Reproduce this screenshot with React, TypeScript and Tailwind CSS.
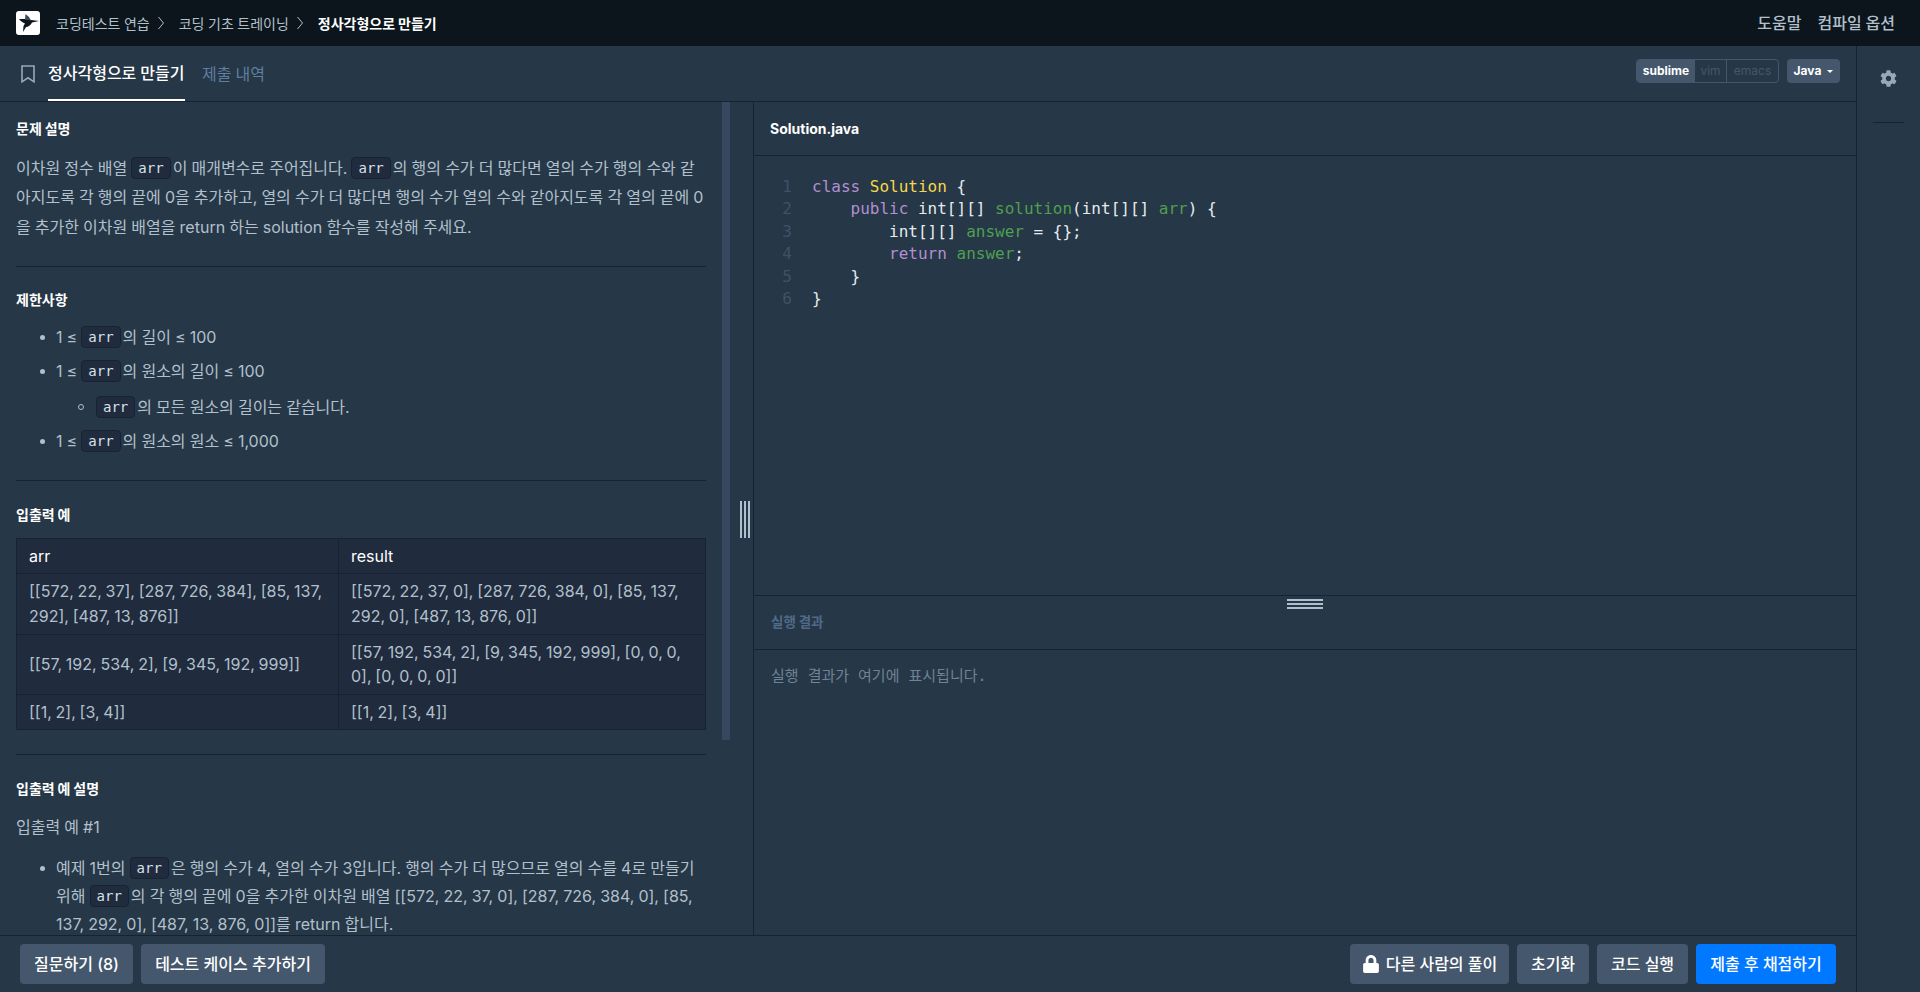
import React from 'react'
import { FaCog, FaLock } from 'react-icons/fa'

const sans = "font-['Inter','Noto_Sans_CJK_KR',sans-serif] [word-spacing:-0.4px]"

function Arr() {
  return (
    <code className="mr-[2px] inline-block h-[22px] rounded-[4px] border border-[#172334] bg-[#202b3d] px-[6px] align-[1px] font-['DejaVu_Sans_Mono','Noto_Sans_CJK_KR',monospace] text-[14px] leading-[20px] text-[#d7e2eb]">
      arr
    </code>
  )
}

function Crumb({ children }: { children: React.ReactNode }) {
  return (
    <span className="flex items-center">
      <span className="text-[14px] text-[#b2c0cc]">{children}</span>
      <svg width="6" height="14" viewBox="0 0 6 14" className="ml-[8px] mr-[15px]" fill="none" stroke="#b2c0cc" strokeWidth="1">
        <path d="M0.5 1 L5.5 7 L0.5 13" />
      </svg>
    </span>
  )
}

function Heading({ children, className = '' }: { children: React.ReactNode; className?: string }) {
  return <h5 className={`text-[14px] font-bold leading-[20px] text-white ${className}`}>{children}</h5>
}

function Hr({ className = '' }: { className?: string }) {
  return <div className={`h-px bg-[#172334] ${className}`} />
}

function Bullet({ children, className = '' }: { children: React.ReactNode; className?: string }) {
  return (
    <li className={`relative pl-[40px] leading-[28px] ${className}`}>
      <span className="absolute left-[24px] top-[12px] h-[5px] w-[5px] rounded-full bg-[#b2c0cc]" />
      {children}
    </li>
  )
}

function Btn({ children, className = '' }: { children: React.ReactNode; className?: string }) {
  return (
    <button className={`flex h-[40px] items-center justify-center rounded-[4px] bg-[#44576c] text-[16px] font-medium text-white ${className}`}>
      {children}
    </button>
  )
}

const cell = 'border border-[#172334] px-[12px] py-[5px] align-middle text-[16px] leading-[24.6px] [word-spacing:-0.7px]'

export default function App() {
  const kw = 'text-[#b28fd0]'
  const fn = 'text-[#4e9f50]'
  return (
    <div className={`flex h-[992px] w-[1920px] flex-col overflow-hidden bg-[#263747] text-[#b2c0cc] ${sans}`}>
      {/* 상단 네비 */}
      <header className="flex h-[46px] shrink-0 items-center justify-between bg-[#0c151c] pl-[16px] pr-[25px]">
        <div className="flex items-center">
          <div className="mr-[16px] h-[24px] w-[24px] rounded-[3px] bg-white">
            <svg width="24" height="24" viewBox="0 0 24 24">
              <path fill="#0c151c" d="M3 8 L9 8 L15 9 L23 10 L16 11.5 C15 14 12 16 10 16 L7 21 L7.5 15 L9 12.5 C7 11.5 4.5 10 3 8 Z" />
              <path fill="#3d4a55" d="M9 8.5 L9.5 3 L13 6 L15 9.5 Z" />
            </svg>
          </div>
          <Crumb>코딩테스트 연습</Crumb>
          <Crumb>코딩 기초 트레이닝</Crumb>
          <span className="text-[14px] font-bold text-white">정사각형으로 만들기</span>
        </div>
        <div className="flex gap-[16px] text-[16px] font-medium text-[#b2c0cc]">
          <span>도움말</span>
          <span>컴파일 옵션</span>
        </div>
      </header>

      <div className="flex min-h-0 flex-1">
        <div className="flex min-w-0 flex-1 flex-col">
          {/* 탭 */}
          <div className="flex h-[56px] shrink-0 items-end justify-between border-b border-[#172334] pr-[16px]">
            <div className="flex h-full items-center pl-[21px]">
              <svg width="14" height="18" viewBox="0 0 14 18" fill="none" stroke="#98a8b9" strokeWidth="1.6" className="mr-[13px]">
                <path d="M1 1 H13 V16.8 L7 12.8 L1 16.8 Z" />
              </svg>
              <div className="mr-[17px] flex h-[55px] w-[137px] items-center whitespace-nowrap border-b-[2px] border-white text-[16px] font-medium text-white">
                정사각형으로 만들기
              </div>
              <span className="text-[16px] text-[#5f7f9e]">제출 내역</span>
            </div>
            <div className="mb-[18px] flex items-center gap-[8px] text-[12px]">
              <div className="flex h-[24px] overflow-hidden rounded-[4px] border border-[#44576c]">
                <span className="flex w-[58px] items-center justify-center bg-[#44576c] font-bold text-white">sublime</span>
                <span className="flex w-[32px] items-center justify-center border-r border-[#44576c] text-[#44576c]">vim</span>
                <span className="flex w-[51px] items-center justify-center text-[#44576c]">emacs</span>
              </div>
              <div className="flex h-[24px] w-[53px] items-center justify-center gap-[6px] rounded-[4px] bg-[#44576c] font-bold text-white">
                Java
                <span className="h-0 w-0 border-x-[3px] border-t-[3px] border-x-transparent border-t-white" />
              </div>
            </div>
          </div>

          <div className="flex min-h-0 flex-1">
            {/* 문제 설명 */}
            <section className="relative w-[754px] shrink-0 overflow-hidden border-r border-[#172334]">
              <div className="w-[706px] pl-[16px] pt-[17px]">
                <Heading>문제 설명</Heading>
                <p className="mt-[15px] text-[16px] leading-[29.3px]">
                  이차원 정수 배열 <Arr />이 매개변수로 주어집니다. <Arr />의 행의 수가 더 많다면 열의 수가 행의 수와 같아지도록 각 행의 끝에 0을 추가하고, 열의 수가 더 많다면 행의 수가 열의 수와 같아지도록 각 열의 끝에 0을 추가한 이차원 배열을 return 하는 solution 함수를 작성해 주세요.
                </p>
                <Hr className="mt-[24px]" />
                <Heading className="mt-[23px]">제한사항</Heading>
                <ul className="mt-[13px] text-[16px]">
                  <Bullet>1 ≤ <Arr />의 길이 ≤ 100</Bullet>
                  <Bullet className="mt-[6px]">1 ≤ <Arr />의 원소의 길이 ≤ 100</Bullet>
                  <li className="relative mt-[8px] pl-[80px] leading-[28px]">
                    <span className="absolute left-[62px] top-[11px] h-[6px] w-[6px] rounded-full border border-[#b2c0cc]" />
                    <Arr />의 모든 원소의 길이는 같습니다.
                  </li>
                  <Bullet className="mt-[6px]">1 ≤ <Arr />의 원소의 원소 ≤ 1,000</Bullet>
                </ul>
                <Hr className="mt-[25px]" />
                <Heading className="mt-[24px]">입출력 예</Heading>
                <table className="mt-[13px] w-[690px] table-fixed border-collapse bg-[#202b3d]">
                  <colgroup>
                    <col className="w-[322px]" />
                    <col />
                  </colgroup>
                  <tbody>
                    <tr className="text-white">
                      <td className={cell}>arr</td>
                      <td className={cell}>result</td>
                    </tr>
                    <tr>
                      <td className={cell}>[[572, 22, 37], [287, 726, 384], [85, 137, 292], [487, 13, 876]]</td>
                      <td className={cell}>[[572, 22, 37, 0], [287, 726, 384, 0], [85, 137, 292, 0], [487, 13, 876, 0]]</td>
                    </tr>
                    <tr>
                      <td className={cell}>[[57, 192, 534, 2], [9, 345, 192, 999]]</td>
                      <td className={cell}>[[57, 192, 534, 2], [9, 345, 192, 999], [0, 0, 0, 0], [0, 0, 0, 0]]</td>
                    </tr>
                    <tr>
                      <td className={cell}>[[1, 2], [3, 4]]</td>
                      <td className={cell}>[[1, 2], [3, 4]]</td>
                    </tr>
                  </tbody>
                </table>
                <Hr className="mt-[24px]" />
                <Heading className="mt-[24px]">입출력 예 설명</Heading>
                <p className="mt-[14px] text-[16px] leading-[28px]">입출력 예 #1</p>
                <ul className="mt-[13px] text-[16px]">
                  <Bullet>
                    예제 1번의 <Arr />은 행의 수가 4, 열의 수가 3입니다. 행의 수가 더 많으므로 열의 수를 4로 만들기 위해 <Arr />의 각 행의 끝에 0을 추가한 이차원 배열 [[572, 22, 37, 0], [287, 726, 384, 0], [85, 137, 292, 0], [487, 13, 876, 0]]를 return 합니다.
                  </Bullet>
                </ul>
              </div>
              {/* 스크롤바, 리사이즈 핸들 */}
              <div className="absolute left-[722px] top-0 h-[638px] w-[8px] bg-[#37475f]" />
              <div className="absolute left-[740px] top-[399px] flex h-[37px] w-[10px] justify-between">
                <span className="w-[2px] bg-[#b2c0cc]" />
                <span className="w-[2px] bg-[#b2c0cc]" />
                <span className="w-[2px] bg-[#b2c0cc]" />
              </div>
            </section>

            {/* 코드 에디터 */}
            <section className="flex min-w-0 flex-1 flex-col">
              <div className="flex h-[54px] shrink-0 items-center border-b border-[#172334] pl-[16px] text-[14px] font-bold text-white">
                Solution.java
              </div>
              <div className="flex h-[439px] shrink-0 pt-[20px] font-['DejaVu_Sans_Mono',monospace] text-[16px] leading-[22.4px] text-[#e4ebef] [word-spacing:0]">
                <div className="w-[58px] shrink-0 pr-[20px] text-right text-[#3f5268]">
                  <div>1</div>
                  <div>2</div>
                  <div>3</div>
                  <div>4</div>
                  <div>5</div>
                  <div>6</div>
                </div>
                <pre className="font-['DejaVu_Sans_Mono',monospace]">
                  <span className={kw}>class</span> <span className="text-[#f5d84a]">Solution</span> {'{'}{'\n'}
                  {'    '}<span className={kw}>public</span> int[][] <span className={fn}>solution</span>(int[][] <span className={fn}>arr</span>) {'{'}{'\n'}
                  {'        '}int[][] <span className={fn}>answer</span> = {'{}'};{'\n'}
                  {'        '}<span className={kw}>return</span> <span className={fn}>answer</span>;{'\n'}
                  {'    }'}{'\n'}
                  {'}'}
                </pre>
              </div>
              <div className="relative flex h-[55px] shrink-0 items-center border-y border-[#172334] pl-[17px] text-[13.5px] font-bold text-[#4f6b87]">
                실행 결과
                <div className="absolute left-[533px] top-[3px] flex h-[10px] w-[36px] flex-col justify-between">
                  <span className="h-[2px] bg-[#b2c0cc]" />
                  <span className="h-[2px] bg-[#b2c0cc]" />
                  <span className="h-[2px] bg-[#b2c0cc]" />
                </div>
              </div>
              <div className="pl-[17px] pt-[16px] font-['DejaVu_Sans_Mono','Noto_Sans_CJK_KR',monospace] text-[15px] leading-[20px] text-[#6f8296] [word-spacing:0]">
                실행 결과가 여기에 표시됩니다.
              </div>
            </section>
          </div>

          {/* 하단 버튼 */}
          <footer className="flex h-[57px] shrink-0 items-start justify-between border-t border-[#172334] pl-[20px] pr-[20px] pt-[8px]">
            <div className="flex gap-[8px]">
              <Btn className="w-[113px]">질문하기 (8)</Btn>
              <Btn className="w-[184px]">테스트 케이스 추가하기</Btn>
            </div>
            <div className="flex gap-[8px]">
              <Btn className="w-[159px] gap-[6px]">
                <FaLock size={18} />
                다른 사람의 풀이
              </Btn>
              <Btn className="w-[72px]">초기화</Btn>
              <Btn className="w-[91px]">코드 실행</Btn>
              <Btn className="w-[140px] !bg-[#0078ff]">제출 후 채점하기</Btn>
            </div>
          </footer>
        </div>

        {/* 오른쪽 사이드바 */}
        <aside className="flex w-[64px] shrink-0 flex-col items-center border-l border-[#172334] pt-[24px]">
          <FaCog size={17} className="text-[#98a8b9]" />
          <div className="mt-[35px] h-px w-[31px] bg-[#172334]" />
        </aside>
      </div>
    </div>
  )
}
